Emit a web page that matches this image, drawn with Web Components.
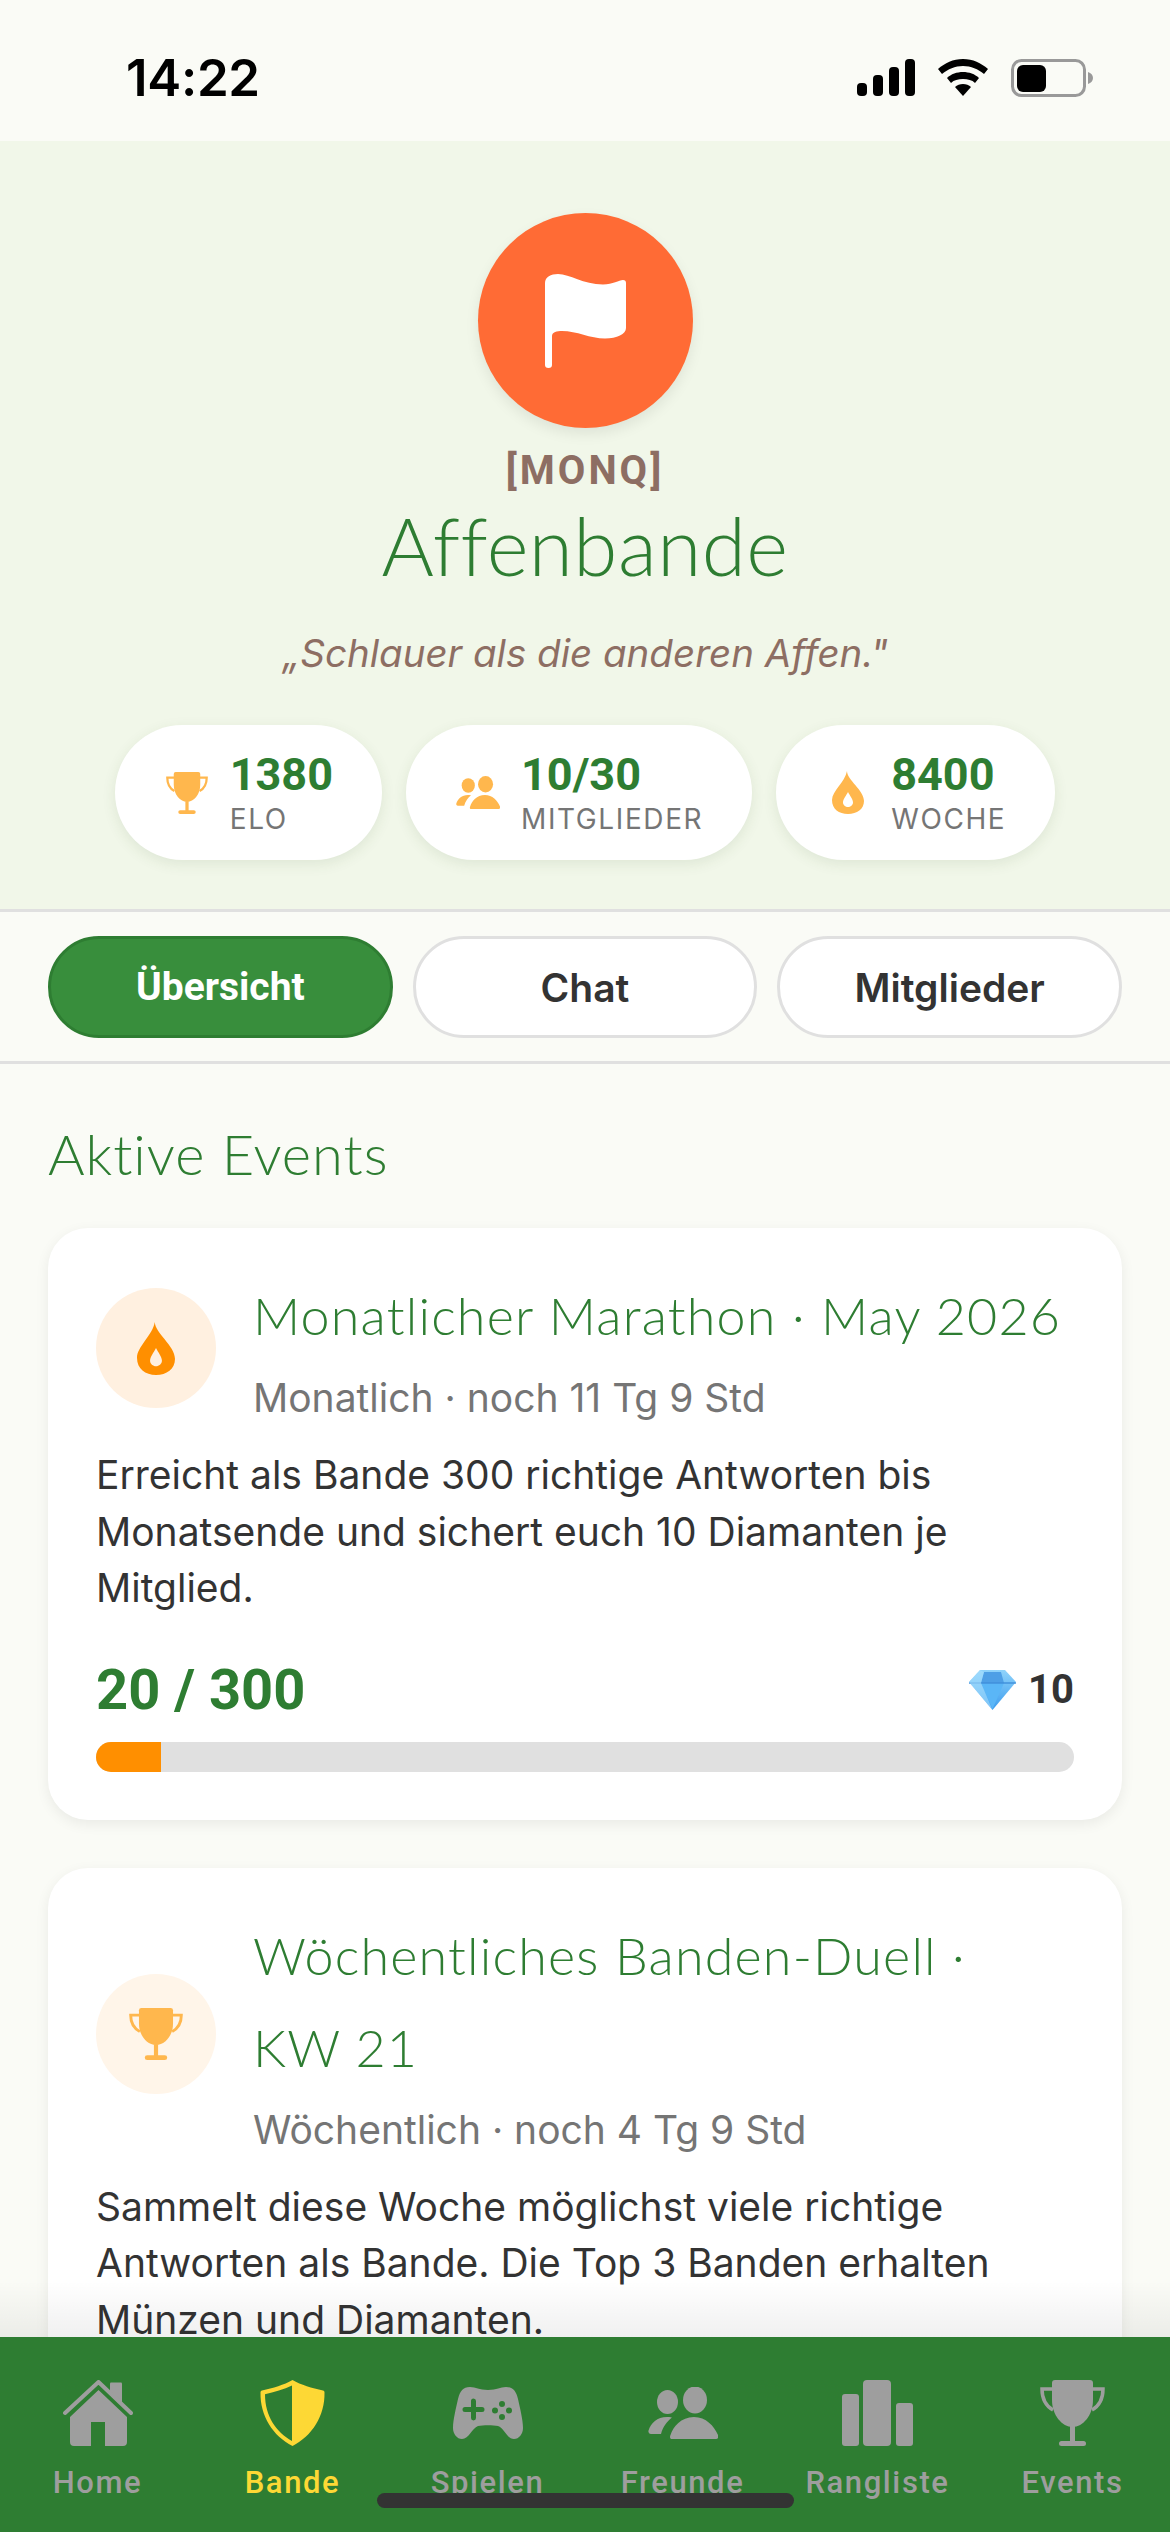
<!DOCTYPE html>
<html lang="de"><head><meta charset="utf-8"><title>Affenbande</title>
<style>
html,body{margin:0;padding:0;background:#FAFBF6}
body{width:1170px;height:2532px;overflow:hidden;font-family:Inter,"Liberation Sans",sans-serif}
</style></head><body>
<band-app>
  <status-bar></status-bar>
  <band-header tag="[MONQ]" name="Affenbande" quote="„Schlauer als die anderen Affen.&quot;">
    <stat-chip icon="trophy" value="1380" label="ELO"></stat-chip>
    <stat-chip icon="people" value="10/30" label="MITGLIEDER"></stat-chip>
    <stat-chip icon="flame" value="8400" label="WOCHE"></stat-chip>
  </band-header>
  <tab-bar>
    <tab-button active>Übersicht</tab-button>
    <tab-button>Chat</tab-button>
    <tab-button>Mitglieder</tab-button>
  </tab-bar>
  <events-section heading="Aktive Events">
    <event-card icon="flame" tone="strong" title-text="Monatlicher Marathon · May 2026" sub="Monatlich · noch 11 Tg 9 Std" progress="20 / 300" pct="6.67" reward="10">Erreicht als Bande 300 richtige Antworten bis Monatsende und sichert euch 10 Diamanten je Mitglied.</event-card>
    <event-card icon="trophy" tone="soft" title-text="Wöchentliches Banden-Duell · KW 21" sub="Wöchentlich · noch 4 Tg 9 Std">Sammelt diese Woche möglichst viele richtige Antworten als Bande. Die Top 3 Banden erhalten Münzen und Diamanten.</event-card>
  </events-section>
  <bottom-nav slot="nav">
    <nav-item icon="home">Home</nav-item>
    <nav-item icon="shield" active>Bande</nav-item>
    <nav-item icon="gamepad">Spielen</nav-item>
    <nav-item icon="friends">Freunde</nav-item>
    <nav-item icon="bars">Rangliste</nav-item>
    <nav-item icon="cup">Events</nav-item>
  </bottom-nav>
</band-app>
<script>
const ICONS={
 trophy:['0 0 65 66','<path d="M12 3q0-3 3-3h35q3 0 3 3v17c0 15-10 27-20.500 27S12 35 12 20z"/><rect x="30" y="46" width="5" height="16"/><rect x="19" y="60" width="27" height="6" rx="3"/><path d="M13 9H2c0 11 4 17 11 21M52 9h11c0 11-4 17-11 21" fill="none" stroke="currentColor" stroke-width="3.500"/>'],
 people:['0 0 70 52','<ellipse cx="47" cy="13" rx="12" ry="13"/><ellipse cx="19.500" cy="15" rx="10.500" ry="11.500"/><path d="M24 52c-2 0-2.500-2-1.500-4 2.500-8 10.500-18 23.500-18 12 0 20 9 24 18 1 2 0 4-2 4z"/><path d="M3 47c-2 0-3-2-2.500-3.500C3 36 9 30 19 30c3 0 5 .5 5 .5-5 4-9 9-11 16.500z"/>'],
 flame:['0 0 32 43','<path fill-rule="evenodd" d="M15 0C15 9 32 19 32 30c0 8-7 13-16 13S0 38 0 29C0 20 13 11 15 0zM16 21c-2 4-5 7-5 10.500 0 2.500 2.500 4.500 5 4.500s5-2 5-4.500C21 28 18 25 16 21z"/>'],
 home:['0 0 70 66','<path d="M47 3.500q0-1 1-1h10q1 0 1 1V24L47 13z"/><path d="M35.500 10 64 37v25q0 4-4 4H42V42H28v24H11q-4 0-4-4V37z"/><path d="M2 33 35.500 2 68 33" fill="none" stroke="currentColor" stroke-width="4" stroke-linecap="round" stroke-linejoin="round"/>'],
 shield:['0 0 65 66','<path fill-rule="evenodd" d="M32.500 0C41 5 52 8 63 10.500c1 0 1.500 1 1.500 2C65 36 52 56 32.500 66 13 56 0 36 .5 12.500c0-1 .5-2 1.500-2C13 8 24 5 32.500 0zM32 5.500C24 9.500 14 12 5 14.200 5 36 16 52 32 61z"/>'],
 gamepad:['0 0 70 52','<path fill-rule="evenodd" d="M17 0c6 0 9 3 18 3s12-3 18-3c7 0 10 4 12 12 2 9 5 21 5 29 0 6-4 11-9 11-7 0-10-11-16-13-5-1-15-1-20 0-6 2-9 13-16 13-5 0-9-5-9-11 0-8 3-20 5-29C7 4 10 0 17 0zM18 14v6h-6a2 2 0 000 5h6v6a2.500 2.500 0 005 0v-6h6a2 2 0 000-5h-6v-6a2.500 2.500 0 00-5 0zM46 17a3 3 0 106 0 3 3 0 00-6 0zM46 30a3 3 0 106 0 3 3 0 00-6 0zM39 23.500a3 3 0 106 0 3 3 0 00-6 0zM53 23.500a3 3 0 106 0 3 3 0 00-6 0z"/>'],
 friends:['0 0 70 52','<ellipse cx="47" cy="13" rx="12" ry="13.500"/><ellipse cx="19.500" cy="15" rx="10.500" ry="12"/><path d="M24 52c-2 0-2.500-2-1.500-4 2.500-8 10.500-18 23.500-18 12 0 20 9 24 18 1 2 0 4-2 4z"/><path d="M3 47c-2 0-3-2-2.500-3.500C3 36 9 30 19 30c3 0 5 .5 5 .5-5 4-9 9-11 16.500z"/>'],
 bars:['0 0 71 66','<rect y="14" width="17" height="52" rx="3"/><rect x="21" width="28" height="66" rx="4"/><rect x="54" y="23" width="17" height="43" rx="3"/>'],
 cup:['0 0 65 66','<path d="M12 3q0-3 3-3h35q3 0 3 3v17c0 15-10 27-20.500 27S12 35 12 20z"/><rect x="30" y="46" width="5" height="16"/><rect x="19" y="61" width="27" height="5" rx="2.500"/><path d="M13 9H2c0 11 4 17 11 21M52 9h11c0 11-4 17-11 21" fill="none" stroke="currentColor" stroke-width="3.500"/>']
};
function iconSvg(n,w,h){const i=ICONS[n];return `<svg viewBox="${i[0]}" width="${w}" height="${h}" fill="currentColor" preserveAspectRatio="none" aria-hidden="true">${i[1]}</svg>`}
function el(name,styles,html){
 customElements.define(name,class extends HTMLElement{
  connectedCallback(){
   if(this.shadowRoot)return;
   const r=this.attachShadow({mode:'open'});
   r.innerHTML=`<style>${styles}</style>`+(typeof html==='function'?html(this):html);
  }
 });
}
const HAND='"Lato","Open Sans",sans-serif';
el('band-app',`:host{display:block;position:relative;width:1170px;height:2532px;overflow:hidden;background:#FAFBF6}
 .fade{position:absolute;left:0;right:0;bottom:195px;height:56px;background:linear-gradient(rgba(0,0,0,0),rgba(0,0,0,.06));pointer-events:none}
 .nav{position:absolute;left:0;right:0;bottom:0}
 .bar{position:absolute;left:377px;bottom:24px;width:417px;height:15px;border-radius:8px;background:#333}`,
 `<slot></slot><div class="fade"></div><div class="nav"><slot name="nav"></slot></div><div class="bar"></div>`);
el('status-bar',`:host{display:flex;height:141px;box-sizing:border-box;justify-content:space-between;padding:59px 76px 0 126px;background:#FAFBF6;color:#000}
 .t{font:600 51px/37px Inter,sans-serif;letter-spacing:-.3px}
 .r{display:flex;gap:23px;align-items:flex-start}
 svg{display:block}`,
 `<div class="t">14:22</div><div class="r">
 <svg width="58" height="37" viewBox="0 0 58 37"><rect y="24" width="10" height="13" rx="4"/><rect x="16" y="16" width="10" height="21" rx="4"/><rect x="32" y="8" width="10" height="29" rx="4"/><rect x="48" width="10" height="37" rx="4"/></svg>
 <svg width="50" height="37" viewBox="0 0 50 37"><path d="M25 0c10 0 18 4 25 10l-4 5c-6-5-13-8-21-8S10 10 4 15L0 10C7 4 15 0 25 0z"/><path d="M25 13c6 0 12 2 16 6l-4 5c-3-3-7-4-12-4s-9 1-12 4L9 19c4-4 10-6 16-6z"/><path d="M25 25c3 0 6 1 8 3l-8 9-8-9c2-2 5-3 8-3z"/></svg>
 <svg width="83" height="38" viewBox="0 0 83 38"><rect x="1.500" y="1.500" width="72" height="35" rx="9" fill="none" stroke="#999" stroke-width="3"/><rect x="6" y="6" width="29" height="27" rx="6"/><path d="M77 13c3 1 5 3 5 6s-2 5-5 6z" fill="#999"/></svg>
 </div>`);
el('band-header',`:host{display:block;background:#F1F7E9;padding:72px 0 48px;text-align:center;height:768px;box-sizing:border-box}
 .av{width:215px;height:215px;border-radius:50%;background:#FF6B35;margin:0 auto;display:flex;align-items:center;justify-content:center;box-shadow:0 6px 14px rgba(0,0,0,.08)}
 .tag{font:700 40px/40px Roboto,sans-serif;letter-spacing:3px;color:#8D6E63;margin-top:23px}
 .name{font:300 80px/80px ${HAND};color:#2E7D32;margin-top:14px;letter-spacing:.5px}
 .q{font:italic 400 38.500px/46px Inter,sans-serif;color:#8D6E63;margin-top:45px}
 .chips{display:flex;justify-content:center;gap:24px;margin-top:49px}`,
 h=>`<div class="av"><svg width="81" height="94" viewBox="0 0 81 94" fill="#fff"><path d="M0 9C0 3 6 0 13 0C25 0 38 10.500 58 10.500C68 10.500 74 6 78 6Q81 6 81 9V54C81 60 72 64.500 60 64.500C45 64.500 32 57 17 57C12 57 7 58 7 62V91Q7 94 3.500 94Q0 94 0 91Z"/></svg></div>
 <div class="tag">${h.getAttribute('tag')}</div><div class="name">${h.getAttribute('name')}</div><div class="q">${h.getAttribute('quote')}</div><div class="chips"><slot></slot></div>`);
el('stat-chip',`:host{display:flex;align-items:center;height:135px;box-sizing:border-box;padding:0 49px 0 50px;background:#fff;border-radius:68px;box-shadow:0 4px 14px rgba(60,90,40,.1);gap:21px;text-align:left}
 .i{width:44px;display:flex;justify-content:center;color:#FFB74D}
 .v{font:700 45px/52px Roboto,sans-serif;color:#2E7D32}
 .l{font:400 28px/36px Inter,sans-serif;letter-spacing:1.600px;color:#757575}
 svg{display:block}`,
 h=>{const n=h.getAttribute('icon');const s=n==='people'?[44,33]:n==='flame'?[32,43]:[42,42];return `<div class="i">${iconSvg(n,s[0],s[1])}</div><div><div class="v">${h.getAttribute('value')}</div><div class="l">${h.getAttribute('label')}</div></div>`});
el('tab-bar',`:host{display:flex;gap:20px;padding:24px 48px 23px;border-top:3px solid #E0E0E0;border-bottom:3px solid #E0E0E0;background:#FAFBF6}`,`<slot></slot>`);
el('tab-button',`:host{flex:1;height:102px;box-sizing:border-box;display:flex;align-items:center;justify-content:center;border-radius:51px;border:3px solid #E0E0E0;background:#fff;color:#333;font:600 39px/1 Inter,sans-serif}
 :host([active]){background:#388E3C;border-color:#2E7D32;color:#fff;font:700 39px/1 Roboto,sans-serif}`,`<slot></slot>`);
el('events-section',`:host{display:block;padding:57px 48px 0}
 h2{margin:0 0 41px;font:300 56px/66px ${HAND};color:#2E7D32;letter-spacing:1px}
 .c{display:flex;flex-direction:column;gap:48px}`,
 h=>`<h2>${h.getAttribute('heading')}</h2><div class="c"><slot></slot></div>`);
el('event-card',`:host{display:block;background:#fff;border-radius:40px;padding:48px;box-shadow:0 4px 14px rgba(0,0,0,.07)}
 .top{display:flex;gap:37px;align-items:center}
 .ic{flex:none;width:120px;height:120px;border-radius:50%;display:flex;align-items:center;justify-content:center;margin-top:-6px}
 .strong .ic{background:#FFF0E0;color:#FF8F00}
 .soft .ic{background:#FFF5E9;color:#FFB74D}
 .tt{font:300 52px/92px ${HAND};color:#2E7D32;margin-top:-7px;letter-spacing:1.200px;padding-right:10px}
 .sub{font:400 39px/56px Inter,sans-serif;color:#757575;margin-top:9px}
 .d{font:400 39px/56.500px Inter,sans-serif;color:#333;margin-top:21px}
 .pr{display:flex;justify-content:space-between;align-items:center;margin-top:42px;height:62px}
 .n{font:700 56px/62px Roboto,sans-serif;color:#2E7D32}
 .rw{display:flex;align-items:center;gap:12px;font:700 40px/44px Roboto,sans-serif;color:#333}
 .b{height:30px;border-radius:15px;background:#E0E0E0;overflow:hidden;margin-top:21px}
 .f{height:100%;background:#FF8F00}
 svg{display:block}`,
 h=>{const n=h.getAttribute('icon');const s=n==='flame'?[38,53]:[54,52];const p=h.getAttribute('progress');
 return `<div class="${h.getAttribute('tone')}"><div class="top"><div class="ic">${iconSvg(n,s[0],s[1])}</div><div><div class="tt">${h.getAttribute('title-text')}</div><div class="sub">${h.getAttribute('sub')}</div></div></div>
 <div class="d"><slot></slot></div>
 ${p?`<div class="pr"><div class="n">${p}</div><div class="rw"><svg width="47" height="41" viewBox="0 0 47 41"><defs><linearGradient id="g" x1="0" y1="0" x2="0" y2="1"><stop offset="0" stop-color="#8FD3FB"/><stop offset="1" stop-color="#3C9CEE"/></linearGradient></defs><path d="M11 1h25l11 12-23.500 28L0 13z" fill="url(#g)"/><path d="M15 3h17l3 11H12z" fill="#4E9FE6"/><path d="M12 14h23l-11.500 26z" fill="#5AB6F7"/><path d="M0 13h47v2H0z" fill="#3F8FDA" opacity=".7"/><path d="M0 13l11-12 4 2-3 11 11.500 27z" fill="#A8E0FD" opacity=".6"/></svg><span>${h.getAttribute('reward')}</span></div></div>
 <div class="b"><div class="f" style="width:${h.getAttribute('pct')}%"></div></div>`:''}</div>`});
el('bottom-nav',`:host{display:grid;grid-template-columns:repeat(6,1fr);height:195px;box-sizing:border-box;background:#2E7D32;padding-top:43px}`,`<slot></slot>`);
el('nav-item',`:host{display:flex;flex-direction:column;align-items:center;color:#9E9E9E;font:500 31px/36px Roboto,sans-serif;letter-spacing:1.600px}
 :host([active]){color:#FDD835}
 .i{height:66px;display:flex;align-items:center}
 .l{margin-top:19px}
 svg{display:block}`,
 h=>{const n=h.getAttribute('icon');const s={home:[70,66],shield:[65,66],gamepad:[70,52],friends:[70,52],bars:[71,66],cup:[65,66]}[n];return `<div class="i">${iconSvg(n,s[0],s[1])}</div><div class="l"><slot></slot></div>`});
</script>
</body></html>
